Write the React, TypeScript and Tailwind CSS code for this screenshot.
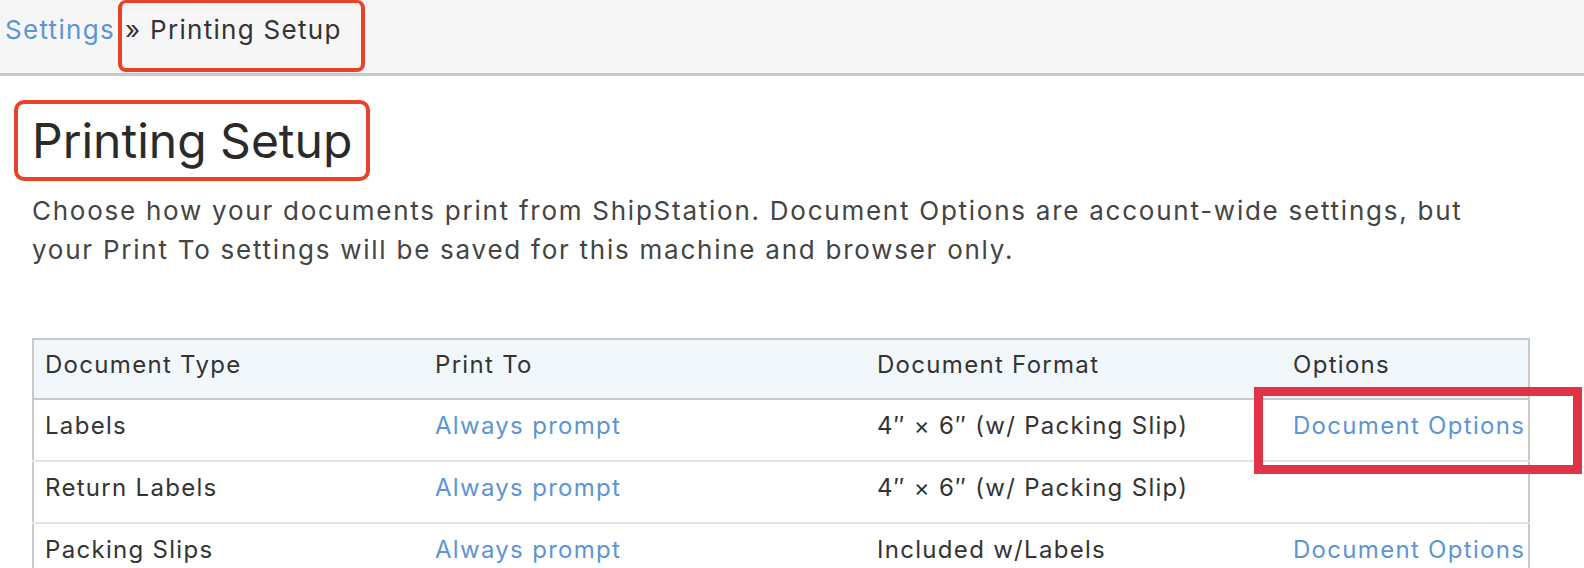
import React from 'react';

const rows = [
  { type: 'Labels', format: '4″ × 6″ (w/ Packing Slip)', options: true, highlight: true },
  { type: 'Return Labels', format: '4″ × 6″ (w/ Packing Slip)', options: false, highlight: false },
  { type: 'Packing Slips', format: 'Included w/Labels', options: true, highlight: false },
];

const App: React.FC = () => {
  return (
    <div className="min-h-screen bg-white text-[#333] font-['Inter',sans-serif] overflow-hidden">
      {/* breadcrumb */}
      <div className="h-[76px] bg-[#f6f6f6] border-b-[3px] border-[#c9c9c9] flex items-start pl-[5px]">
        <a className="text-[#5b95d6] text-[26px] leading-[60px] tracking-[1.3px]">Settings</a>
        <span className="ml-[3px] h-[72px] inline-flex items-start pl-[3px] pr-[19px] border-4 border-[#ea4228] border-t-[3px] rounded-lg text-[26px] leading-[54px] tracking-[1.3px] text-[#333]">
          » Printing Setup
        </span>
      </div>

      <div className="pl-[32px]">
        <div className="mt-[24px] -ml-[18px] w-[356px] h-[81px] border-4 border-[#ea4228] rounded-[10px] flex items-center pl-[14px]">
          <h1 className="text-[48px] leading-none font-normal text-[#2a2a2a]">Printing Setup</h1>
        </div>

        <p className="mt-[10px] text-[26px] leading-[39px] tracking-[1.75px] text-[#444] max-w-[1520px]">
          Choose how your documents print from ShipStation. Document Options are account-wide settings, but
          <br />
          your Print To settings will be saved for this machine and browser only.
        </p>

        <table className="mt-[69px] w-[1498px] border-2 border-[#c9c9c9] border-collapse text-[24px] tracking-[1.3px] table-fixed">
          <colgroup>
            <col className="w-[391px]" />
            <col className="w-[442px]" />
            <col className="w-[416px]" />
            <col />
          </colgroup>
          <thead>
            <tr className="bg-[#f1f7fb] h-[60px] border-b-2 border-[#c9c9c9]">
              <th className="text-left font-normal pl-[11px] pb-[8px]">Document Type</th>
              <th className="text-left font-normal pl-[11px] pb-[8px]">Print To</th>
              <th className="text-left font-normal pl-[11px] pb-[8px]">Document Format</th>
              <th className="text-left font-normal pl-[11px] pb-[8px]">Options</th>
            </tr>
          </thead>
          <tbody>
            {rows.map((r) => (
              <tr key={r.type} className="h-[62px] border-b-2 border-[#e3e3e3]">
                <td className="pl-[11px] pb-[9px]">{r.type}</td>
                <td className="pl-[11px] pb-[9px] text-[#5b95d6]">Always prompt</td>
                <td className="pl-[11px] pb-[9px]">{r.format}</td>
                <td className="pl-[11px] pb-[9px] relative">
                  {r.options && <span className="text-[#5b95d6]">Document Options</span>}
                  {r.highlight && (
                    <div className="absolute left-[-28px] top-[-13px] w-[328px] h-[87px] border-[9px] border-[#e03346] pointer-events-none" />
                  )}
                </td>
              </tr>
            ))}
          </tbody>
        </table>
      </div>
    </div>
  );
};

export default App;
